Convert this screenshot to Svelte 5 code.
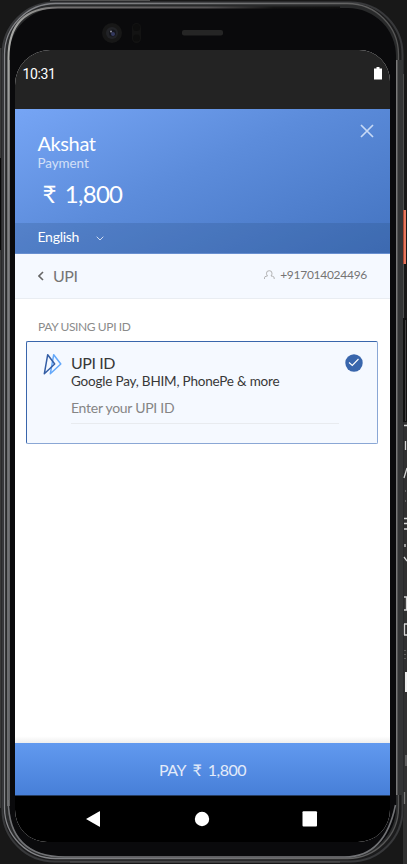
<script>
  const payee = 'Akshat';
  const amount = '1,800';
  const phone = '+917014024496';
</script>

<div class="stage">
  <svg class="shell" width="407" height="864" viewBox="0 0 407 864" aria-hidden="true">
    <defs>
      <linearGradient id="rim" x1="0" y1="0" x2="1" y2="0">
        <stop offset="0" stop-color="#85868a" />
        <stop offset=".5" stop-color="#77787a" />
        <stop offset=".85" stop-color="#666" />
        <stop offset="1" stop-color="#555" />
      </linearGradient>
      <linearGradient id="inner" x1="0" y1="0" x2="1" y2="0">
        <stop offset="0" stop-color="#aaaba8" />
        <stop offset=".15" stop-color="#737171" />
        <stop offset=".6" stop-color="#555354" />
        <stop offset=".8" stop-color="#151515" />
        <stop offset="1" stop-color="#111" />
      </linearGradient>
      <linearGradient id="side" x1="0" y1="0" x2="0" y2="1">
        <stop offset="0" stop-color="#a5a6a3" />
        <stop offset=".2" stop-color="#808184" />
        <stop offset="1" stop-color="#64666a" />
      </linearGradient>
    </defs>
    <rect width="407" height="864" fill="#181818" />
    <rect x="0" y="48" width="2" height="760" fill="#3a3a3a" />
    <rect x="0" y="158" width="1" height="92" fill="#080808" />
    <rect x="403" y="320" width="4" height="544" fill="#303030" />
    <rect x="50" y="0" width="100" height="2" fill="#555" />
    <rect x="1" y="1" width="403" height="862" rx="54" fill="#1b1b1c" />
    <rect x="2.5" y="2.5" width="400" height="859" rx="52" fill="none" stroke="#38393b" stroke-width="2" />
    <rect x="4.5" y="3.5" width="394" height="855" rx="51" fill="#292a2b" stroke="url(#rim)" stroke-width="1.3" />
    <rect x="398" y="60" width="5" height="735" fill="#333435" />
    <rect x="396" y="60" width="1.5" height="735" fill="#797979" />
    <rect x="403" y="74" width="1" height="246" fill="#4d4d4d" />
    <rect x="9" y="8" width="387" height="848" rx="48" fill="#0a0a0c" />
    <path d="M8.5 806V58Q8.5 7.5 58 7.5H340" fill="none" stroke="url(#inner)" stroke-width="2" />
    <path d="M8.3 60V800Q8.3 857 65 857H345Q385 857 395.5 805" fill="none" stroke="#717275" stroke-width="1.6" />
    <rect x="8" y="60" width="1.5" height="740" fill="url(#side)" />
    <path d="M70 862H340" stroke="#555" stroke-width="1" />
    <circle cx="112" cy="33" r="10" fill="#171717" />
    <circle cx="112" cy="33" r="6" fill="#222327" />
    <circle cx="112.5" cy="33" r="3.5" fill="#14151b" />
    <circle cx="113" cy="34" r="2" fill="#34395f" />
    <circle cx="111" cy="31.5" r=".9" fill="#999aac" />
    <rect x="132" y="23" width="9" height="20" rx="4.5" fill="#131313" />
    <circle cx="136.500" cy="27.500" r="3.500" fill="#0d0d0d" />
    <circle cx="136.500" cy="38" r="3.500" fill="#0d0d0d" />
    <rect x="182" y="30" width="41" height="5.500" rx="2" fill="#252525" />
    <rect x="403" y="210" width="3" height="54" fill="#e8785f" />
    <rect x="403" y="210" width="1" height="54" fill="#a94835" />
    <rect x="403" y="318" width="4" height="104" fill="#111" />
    <rect x="405" y="320" width="1" height="101" fill="#414141" />
    <g fill="none" stroke="#d5d5d5" stroke-width="1.3">
      <path d="M404 425.500H407M405.500 441V450M404 478L407 468M404 518.500H407M404 523.500H407M404 529H407M405 544V547M404 557L407 561M404 597H407M406.500 597V610M404 610H407M404.500 624V635M404 624H407M404 635H407" />
      <path d="M405 491H407M405 501H407M405 650V661" stroke="#777" stroke-dasharray="1 3" />
      <path d="M406 672V692" stroke="#eee" stroke-width="2" />
      <path d="M406 755V766M404.500 792V804" stroke="#777" />
    </g>
  </svg>

  <main class="screen">
    <div class="status">
      <span>10:31</span>
      <svg width="8" height="13" viewBox="0 0 8 13"><path d="M0 1.500H2.500V0H5.500V1.500H8V12.500H0Z" fill="#fff" /></svg>
    </div>
    <header>
      <div class="merchant">
        <div class="name">{payee}</div>
        <div class="desc">Payment</div>
        <div class="amount"><span>₹</span><span>{amount}</span></div>
        <button class="close" aria-label="Close">
          <svg width="14" height="14" viewBox="0 0 14 14"><path d="M1 1L13 13M13 1L1 13" /></svg>
        </button>
      </div>
      <div class="language">
        <span>English</span>
        <svg width="8" height="5" viewBox="0 0 8 5"><path d="M.7 .7L4 4L7.300 .7" /></svg>
      </div>
    </header>
    <nav class="method">
      <svg class="back" width="6" height="10" viewBox="0 0 6 10"><path d="M5 1L1 5L5 9" /></svg>
      <span class="title">UPI</span>
      <svg class="user" width="11" height="10" viewBox="0 0 11 10"><path d="M.5 9V7.800Q.5 6.500 2 6.300L3.500 6Q2.500 5 2.500 3.200Q2.500 .7 5.300 .7Q8 .7 8 3.200Q8 5 7 6L8.700 6.300Q10.200 6.600 10.200 8V9" /></svg>
      <span class="phone">{phone}</span>
    </nav>
    <section class="content">
      <h2>PAY USING UPI ID</h2>
      <div class="card">
        <svg class="upi" width="20" height="23" viewBox="0 0 20 23" fill="none" stroke-width="1.5" stroke-linejoin="round">
          <path d="M10.700 1.700L17.800 11L7.300 20.800Z" stroke="#63a8fa" />
          <path d="M4.700 1.700L11.700 11L1.300 20.800Z" stroke="#345ea5" />
        </svg>
        <div class="details">
          <div class="label">UPI ID</div>
          <div class="apps">Google Pay, BHIM, PhonePe &amp; more</div>
          <div class="field">Enter your UPI ID</div>
        </div>
        <svg class="check" width="18" height="18" viewBox="0 0 18 18"><circle cx="9" cy="9" r="8.700" fill="#3966ac" /><path d="M4 8.500L7.300 11.500L13.500 5" fill="none" stroke="#fff" stroke-width="1.100" /></svg>
      </div>
    </section>
    <button class="pay"><span>PAY</span><span>₹</span><span>{amount}</span></button>
    <div class="keys">
      <svg width="375" height="46" viewBox="0 1 375 46" fill="#fff">
        <path d="M71 24L84.500 16.300Q85 16 85 16.500V31.500Q85 32 84.500 31.700Z" />
        <circle cx="187" cy="24" r="7.200" />
        <rect x="287.500" y="16.300" width="14.500" height="15.300" rx="1" />
      </svg>
    </div>
  </main>
</div>

<style>
  .stage { width: 407px; height: 864px; position: relative; box-sizing: border-box; padding: 50px 17px 22px 15px; overflow: hidden; font-family: Lato, "Noto Sans", sans-serif; }
  .shell { position: absolute; left: 0; top: 0; }
  .screen { position: relative; width: 375px; height: 792px; display: flex; flex-direction: column; background: #fff; border-radius: 35px 31px 32px 32px; overflow: hidden; }
  svg { display: block; flex: none; }
  button { border: 0; padding: 0; background: none; font: inherit; }
  .status { height: 59px; box-sizing: border-box; padding: 16px 8px 0 7.500px; display: flex; justify-content: space-between; background: #232323; color: #fff; font: 14px/16px Roboto, sans-serif; letter-spacing: -.4px; }
  .status svg { margin-top: 1px; }
  header { height: 145px; display: flex; flex-direction: column; background: linear-gradient(155deg, #76a5f5 0%, #5c8cdb 45%, #4373c0 100%); color: #fff; }
  .merchant { position: relative; height: 114px; box-sizing: border-box; padding: 22px 23px 0 22.500px; }
  .name { font-size: 20px; line-height: 24px; letter-spacing: -.4px; }
  .desc { margin-top: 1px; font-size: 13.400px; line-height: 15px; opacity: .7; letter-spacing: -.05px; }
  .amount { display: flex; gap: 9px; padding: 8px 0 0 5px; font-size: 24px; line-height: 30px; letter-spacing: -.7px; }
  .close { position: absolute; right: 16px; top: 15px; }
  .close path { fill: none; stroke: #c7d9f5; stroke-width: 1.700; }
  .language { height: 31px; box-sizing: border-box; padding: 0 23px 3px 22.500px; display: flex; align-items: center; gap: 17px; background: rgba(37, 72, 115, .2); border-bottom: 1px solid #688fd0; font-size: 14px; letter-spacing: -.28px; }
  .language svg { margin-top: 4px; }
  .language path { fill: none; stroke: #d1def2; stroke-width: 1; }
  .method { height: 45px; box-sizing: border-box; padding: 0 23px 2px; display: flex; align-items: center; background: #f5f9ff; border-bottom: 1px solid #e9edf2; color: #757575; }
  .method path { fill: none; stroke: #666; stroke-width: 1.600; }
  .back { margin-top: 2px; }
  .title { margin-left: 9px; font-size: 16px; letter-spacing: -.5px; }
  .method .user { margin-left: auto; }
  .method .user path { stroke: #aaa; stroke-width: .9; }
  .phone { margin: -1px 0 0 5px; font-size: 12px; letter-spacing: -.28px; }
  .content { flex: 1; padding: 0 12px 0 11px; background: linear-gradient(#fff 98.500%, #eee); }
  h2 { margin: 20px 0 7px 12px; font-size: 12px; line-height: 15px; font-weight: 400; color: #8b8b8b; letter-spacing: -.38px; }
  .card { height: 103px; box-sizing: border-box; padding: 11px 14px 0 16px; display: flex; border: 1px solid #8aa7d5; border-top-color: #3966ac; border-left-color: #3966ac; border-radius: 2px; background: #f5f9ff; }
  .details { width: 268px; margin-left: 8px; color: #383838; }
  .label { font-size: 16px; line-height: 20px; letter-spacing: -.45px; }
  .apps { font-size: 13.500px; line-height: 16px; white-space: nowrap; letter-spacing: -.2px; }
  .field { height: 35px; box-sizing: border-box; padding-top: 10px; font-size: 14px; line-height: 17px; color: #858585; border-bottom: 1px solid #e8ebef; letter-spacing: -.27px; }
  .check { margin: 1px 0 0 auto; }
  .pay { height: 53px; display: flex; justify-content: center; align-items: center; gap: 6.500px; padding-top: 1px; background: linear-gradient(#6199ef, #477fd8); color: #e3ebf9; font-size: 16px; letter-spacing: -.5px; border-bottom: 1px solid #253c60; }
  .keys { height: 46px; background: #000; }
</style>
